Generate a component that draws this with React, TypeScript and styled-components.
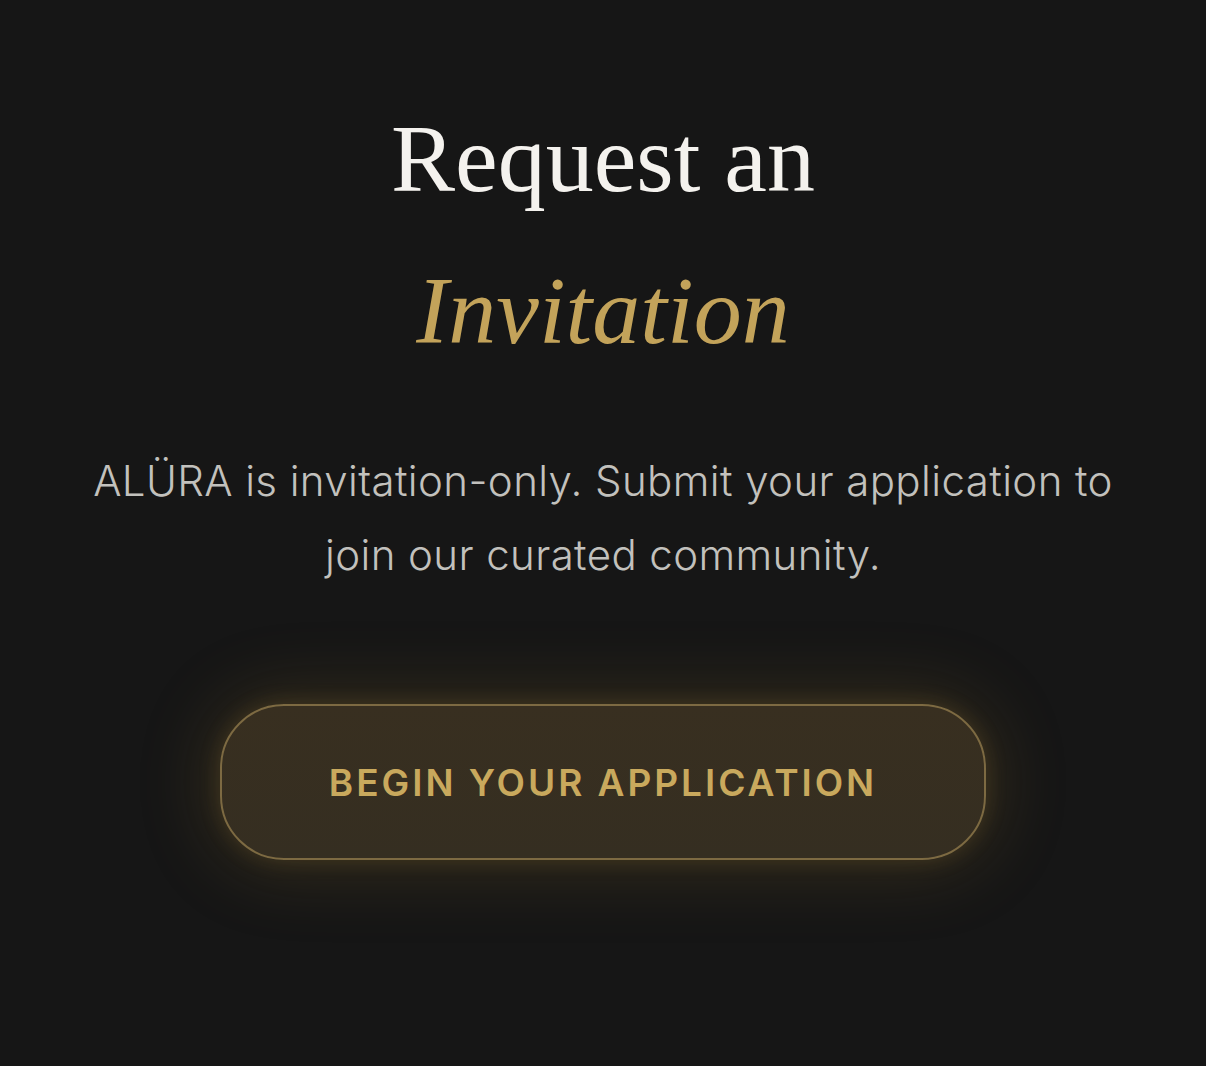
import React from "react";
import styled, { createGlobalStyle } from "styled-components";

const Global = createGlobalStyle`
  html, body { margin: 0; padding: 0; background: #161616; }
  body { min-height: 1066px; }
`;

const Page = styled.main`
  min-height: 1066px;
  background: #161616;
  display: flex;
  flex-direction: column;
  align-items: center;
  padding-top: 83px;
  box-sizing: border-box;
`;

const Heading = styled.h1`
  margin: 0;
  font-family: "Liberation Serif", "Times New Roman", serif;
  font-weight: 400;
  font-size: 96px;
  line-height: 152px;
  color: #f4f2ee;
  text-align: center;
`;

const Accent = styled.em`
  color: #c3a35a;
  font-style: italic;
`;

const Lead = styled.p`
  margin: 57px 0 0;
  width: 1050px;
  font-family: Inter, "Liberation Sans", sans-serif;
  font-weight: 300;
  font-size: 42px;
  line-height: 74px;
  letter-spacing: 0.4px;
  color: #c2c1bd;
  text-align: center;
`;

const CtaButton = styled.button`
  margin-top: 112px;
  width: 766px;
  height: 156px;
  border-radius: 64px;
  border: 2px solid #7d6a42;
  background: linear-gradient(180deg, #382f20 0%, #352e21 100%);
  box-shadow: 0 0 70px 12px rgba(150, 118, 48, 0.22), 0 0 20px 2px rgba(180, 140, 60, 0.18);
  font-family: Inter, "Liberation Sans", sans-serif;
  font-weight: 600;
  font-size: 37px;
  letter-spacing: 0.08em;
  color: #c9a95d;
  cursor: pointer;
`;

export default function App() {
  return (
    <>
      <Global />
      <Page>
        <Heading>
          Request an
          <br />
          <Accent>Invitation</Accent>
        </Heading>
        <Lead>
          ALÜRA is invitation-only. Submit your application to join our curated community.
        </Lead>
        <CtaButton>BEGIN YOUR APPLICATION</CtaButton>
      </Page>
    </>
  );
}
